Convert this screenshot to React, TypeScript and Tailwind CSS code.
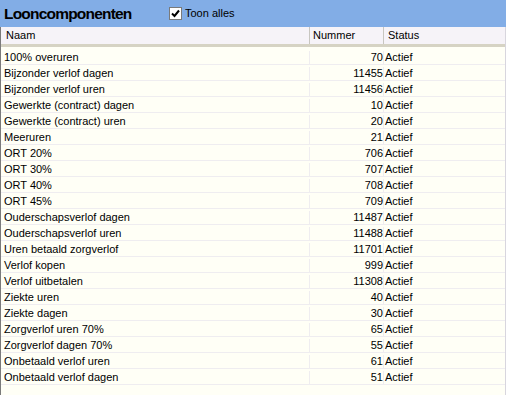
import React from "react";

const rows: [string, number][] = [
  ["100% overuren", 70],
  ["Bijzonder verlof dagen", 11455],
  ["Bijzonder verlof uren", 11456],
  ["Gewerkte (contract) dagen", 10],
  ["Gewerkte (contract) uren", 20],
  ["Meeruren", 21],
  ["ORT 20%", 706],
  ["ORT 30%", 707],
  ["ORT 40%", 708],
  ["ORT 45%", 709],
  ["Ouderschapsverlof dagen", 11487],
  ["Ouderschapsverlof uren", 11488],
  ["Uren betaald zorgverlof", 11701],
  ["Verlof kopen", 999],
  ["Verlof uitbetalen", 11308],
  ["Ziekte uren", 40],
  ["Ziekte dagen", 30],
  ["Zorgverlof uren 70%", 65],
  ["Zorgverlof dagen 70%", 55],
  ["Onbetaald verlof uren", 61],
  ["Onbetaald verlof dagen", 51],
];

export default function App() {
  return (
    <div
      className="w-[506px] h-[395px] overflow-hidden bg-[#fffff6] text-black"
      style={{ fontFamily: '"Liberation Sans", Arial, sans-serif' }}
    >
      <div className="h-[27px] bg-[#82ade6] flex items-center pl-[4px]">
        <span className="w-[165px] text-[15.5px] font-bold leading-none tracking-[-0.8px] pt-[1px]">Looncomponenten</span>
        <div className="flex items-center">
          <div className="w-[13px] h-[13px] bg-white border border-[#7a7a7a] flex items-center justify-center">
            <svg width="9" height="9" viewBox="0 0 9 9">
              <path d="M1 4.5 L3.5 7 L8 1.5" stroke="#000" strokeWidth="2" fill="none" />
            </svg>
          </div>
          <span className="ml-[3px] text-[11px] leading-none">Toon alles</span>
        </div>
      </div>
      <div className="border-l border-[#7a7a7a] border-r border-r-[#d8d6de] h-[368px]">
        <div className="flex h-[20px] bg-[#f6f3f8] text-[11px] leading-[17px] border-b-[3px] border-[#d6d3c4]">
          <div className="w-[309px] pl-[5px] border-r border-[#c8c6c0]">Naam</div>
          <div className="w-[74px] pl-[3px] border-r border-[#c8c6c0]">Nummer</div>
          <div className="flex-1 pl-[4px]">Status</div>
        </div>
        <div className="mt-[2px]">
          {rows.map(([name, num]) => (
            <div key={name} className="flex h-[16px] border-b border-[#efedf0] text-[11px] leading-[12px] pt-[2px]">
              <div className="w-[309px] pl-[3px] border-r border-[#efedf0] whitespace-nowrap">{name}</div>
              <div className="w-[74px] text-right pr-0 border-r border-[#efedf0]">{num}</div>
              <div className="flex-1 pl-[1px]">Actief</div>
            </div>
          ))}
        </div>
      </div>
    </div>
  );
}
